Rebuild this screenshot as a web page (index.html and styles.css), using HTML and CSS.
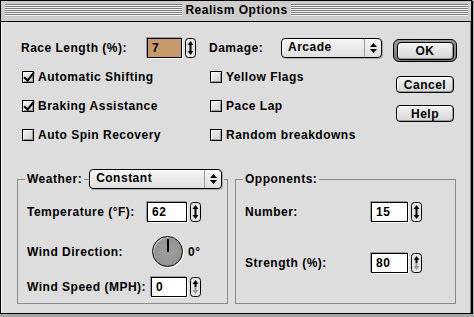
FILE: index.html
```html
<!DOCTYPE html>
<html lang="en">
<head>
    <meta charset="UTF-8">
    <title>Realism Options</title>
    <link rel="stylesheet" href="styles.css">
</head>
<body>

    <div class="window">

        <!-- Title bar -->
        <div class="titlebar">
            <div class="stripes"></div>
            <span class="title">Realism Options</span>
            <div class="stripes"></div>
        </div>

        <div class="content">

            <!-- General options -->
            <div class="top">
                <div class="row">
                    <span class="race-label">Race Length (%):</span>
                    <span class="field field-race">7</span>
                    <span class="stepper">
                        <svg width="11" height="20" viewBox="0 0 11 20"><rect x="0.5" y="0.5" width="10" height="19" rx="3" fill="#e6e6e6" stroke="#000"/><path d="M5.5 3 L8.5 7 L2.5 7 Z M5.5 17 L8.5 13 L2.5 13 Z" fill="#000"/><rect x="4.5" y="7" width="2" height="6" fill="#000"/></svg>
                    </span>
                </div>
                <div class="row">
                    <span class="damage-label">Damage:</span>
                    <span class="popup popup-damage">
                        <span class="popup-text">Arcade</span>
                        <span class="popup-arrows"><svg width="7" height="10" viewBox="0 0 7 10"><path d="M3.5 0 L7 4 L0 4 Z M3.5 10 L7 6 L0 6 Z" fill="#000"/></svg></span>
                    </span>
                </div>
                <div class="buttons">
                    <div class="default-ring"><button class="btn btn-ok">OK</button></div>
                    <button class="btn btn-cancel">Cancel</button>
                    <button class="btn btn-help">Help</button>
                </div>

                <label class="check"><span class="box checked"></span>Automatic Shifting</label>
                <label class="check"><span class="box"></span>Yellow Flags</label>
                <label class="check"><span class="box checked"></span>Braking Assistance</label>
                <label class="check"><span class="box"></span>Pace Lap</label>
                <label class="check"><span class="box"></span>Auto Spin Recovery</label>
                <label class="check"><span class="box"></span>Random breakdowns</label>
            </div>

            <!-- Group boxes -->
            <div class="groups">
                <fieldset class="group group-weather">
                    <legend>
                        <span>Weather:</span>
                        <span class="legend-line"></span>
                        <span class="popup popup-weather">
                            <span class="popup-text">Constant</span>
                            <span class="popup-arrows"><svg width="7" height="10" viewBox="0 0 7 10"><path d="M3.5 0 L7 4 L0 4 Z M3.5 10 L7 6 L0 6 Z" fill="#000"/></svg></span>
                        </span>
                    </legend>

                    <div class="grow grow-temp">
                        <span class="grow-label">Temperature (°F):</span>
                        <span class="field field-temp">62</span>
                        <span class="stepper">
                            <svg width="11" height="20" viewBox="0 0 11 20"><rect x="0.5" y="0.5" width="10" height="19" rx="3" fill="#e6e6e6" stroke="#000"/><path d="M5.5 3 L8.5 7 L2.5 7 Z M5.5 17 L8.5 13 L2.5 13 Z" fill="#000"/><rect x="4.5" y="7" width="2" height="6" fill="#000"/></svg>
                        </span>
                    </div>
                    <div class="grow grow-wind">
                        <span class="grow-label">Wind Direction:</span>
                        <span class="dial"><span class="dial-hand"></span></span>
                        <span class="dial-value">0°</span>
                    </div>
                    <div class="grow grow-speed">
                        <span class="grow-label">Wind Speed (MPH):</span>
                        <span class="field field-speed">0</span>
                        <span class="stepper">
                            <svg width="11" height="20" viewBox="0 0 11 20"><rect x="0.5" y="0.5" width="10" height="19" rx="3" fill="#e6e6e6" stroke="#000"/><path d="M5.5 3 L8.5 7 L2.5 7 Z" fill="#000"/><rect x="4.5" y="7" width="2" height="3" fill="#000"/><path d="M5.5 17 L8.5 13 L2.5 13 Z" fill="#999"/><rect x="4.5" y="10" width="2" height="3" fill="#999"/></svg>
                        </span>
                    </div>
                </fieldset>

                <fieldset class="group group-opponents">
                    <legend><span>Opponents:</span></legend>

                    <div class="grow grow-number">
                        <span class="grow-label">Number:</span>
                        <span class="field field-opp">15</span>
                        <span class="stepper">
                            <svg width="11" height="20" viewBox="0 0 11 20"><rect x="0.5" y="0.5" width="10" height="19" rx="3" fill="#e6e6e6" stroke="#000"/><path d="M5.5 3 L8.5 7 L2.5 7 Z M5.5 17 L8.5 13 L2.5 13 Z" fill="#000"/><rect x="4.5" y="7" width="2" height="6" fill="#000"/></svg>
                        </span>
                    </div>
                    <div class="grow grow-strength">
                        <span class="grow-label">Strength (%):</span>
                        <span class="field field-opp">80</span>
                        <span class="stepper">
                            <svg width="11" height="20" viewBox="0 0 11 20"><rect x="0.5" y="0.5" width="10" height="19" rx="3" fill="#e6e6e6" stroke="#000"/><path d="M5.5 3 L8.5 7 L2.5 7 Z" fill="#000"/><rect x="4.5" y="7" width="2" height="3" fill="#000"/><path d="M5.5 17 L8.5 13 L2.5 13 Z" fill="#999"/><rect x="4.5" y="10" width="2" height="3" fill="#999"/></svg>
                        </span>
                    </div>
                </fieldset>
            </div>

        </div>
    </div>

</body>
</html>
```

FILE: styles.css
```css
body {
    margin: 0;
    background-color: #a8a8a8;
    font-family: "Liberation Sans", Arial, sans-serif;
    font-size: 12px;
    font-weight: bold;
    letter-spacing: 0.5px;
    color: #000;
}

.window {
    width: 472px;
    height: 314px;
    box-sizing: border-box;
    border: 1px solid #000;
    box-shadow: 1px 1px 0 #000;
    background-color: #dddddd;
    display: flex;
    flex-direction: column;
}

/* Title bar */
.titlebar {
    box-sizing: border-box;
    padding: 3px 3px 0 4px;
    background-color: #cccccc;
    border-bottom: 1px solid #000;
    display: flex;
    flex: none;
    height: 21px;
}

.stripes {
    flex: 1;
    height: 12px;
    background: repeating-linear-gradient(to bottom, #7b7b7b 0, #7b7b7b 1px, #f4f4f4 1px, #f4f4f4 2px);
}

.title {
    margin: -2px 3px 0;
    line-height: 16px;
}

.content {
    flex: 1;
    padding: 11px 0 0 15px;
    border-left: 1px solid #f8f8f8;
    border-right: 1px solid #888;
}

/* Top area */
.top {
    display: grid;
    grid-template-columns: 188px 184px 64px;
    grid-template-rows: repeat(4, 29px);
    padding-left: 4px;
}

.row {
    display: flex;
    align-items: center;
}

.race-label {
    width: 126px;
}

.damage-label {
    width: 72px;
}

.field {
    height: 20px;
    box-sizing: border-box;
    border: 1px solid #000;
    background-color: #fff;
    box-shadow: -1px -1px 0 #999, 1px 1px 0 #fff;
    padding: 2px 0 0 4px;
    line-height: 15px;
}

.field-race {
    width: 35px;
    background-color: #c89a6b;
}

.stepper {
    display: flex;
    margin-left: 3px;
}

.popup {
    display: flex;
    height: 20px;
    box-sizing: border-box;
    border: 1px solid #000;
    border-radius: 4px;
    background: linear-gradient(#f6f6f6, #dedede);
    box-shadow: inset 1px 1px 0 #fff, 1px 1px 0 #aaa;
}

.popup-damage {
    width: 101px;
}

.popup-text {
    flex: 1;
    padding-left: 6px;
    line-height: 17px;
}

.popup-arrows {
    width: 16px;
    border-left: 1px solid #999;
    display: flex;
    align-items: center;
    justify-content: center;
}

.buttons {
    grid-column: 3;
    grid-row: 1 / span 4;
    display: flex;
    flex-direction: column;
    align-items: center;
    padding-top: 6px;
}

.default-ring {
    width: 64px;
    height: 23px;
    box-sizing: border-box;
    border: 1px solid #000;
    border-radius: 6px;
    background: linear-gradient(#999, #777);
    display: flex;
    align-items: center;
    justify-content: center;
}

.btn {
    font-family: inherit;
    font-size: 12px;
    font-weight: bold;
    letter-spacing: 0.5px;
    color: #000;
    width: 58px;
    height: 17px;
    padding: 0;
    border: 1px solid #000;
    border-radius: 4px;
    background: linear-gradient(#f2f2f2, #d6d6d6);
    box-shadow: inset 1px 1px 0 #fff, inset -1px -1px 0 #999;
}

.btn-ok {
    width: 57px;
    height: 18px;
}

.btn-cancel {
    margin-top: 14px;
}

.btn-help {
    margin-top: 12px;
}

.check {
    display: flex;
    align-items: center;
}

.box {
    position: relative;
    width: 12px;
    height: 12px;
    box-sizing: border-box;
    margin: 0 4px 0 1px;
    border: 1px solid #000;
    background: linear-gradient(135deg, #f4f4f4, #cfcfcf);
    box-shadow: inset 1px 1px 0 #fff, inset -1px -1px 0 #999;
}

.box.checked::after {
    content: "";
    position: absolute;
    left: 3px;
    top: -2px;
    width: 4px;
    height: 9px;
    border-right: 2px solid #000;
    border-bottom: 2px solid #000;
    transform: rotate(38deg);
}

/* Group boxes */
.groups {
    display: flex;
    gap: 7px;
    margin-top: 20px;
}

.group {
    margin: 0;
    min-width: 0;
    border: 1px solid #8a8a8a;
    padding: 13px 26px 6px 8px;
}

.group legend {
    display: flex;
    align-items: center;
    height: 20px;
    padding: 0 2px;
    margin-left: -1px;
}

.group-weather {
    width: 211px;
    box-sizing: border-box;
}

.group-opponents {
    width: 221px;
    box-sizing: border-box;
    padding-right: 33px;
}

.legend-line {
    width: 5px;
    height: 1px;
    margin: 0 0 0 2px;
    background-color: #8a8a8a;
}

.popup-weather {
    width: 133px;
}

.grow {
    display: flex;
    align-items: center;
    height: 20px;
    padding-left: 1px;
}

.grow-label {
    flex: 1;
}

.grow-wind {
    height: 31px;
    margin-top: 14px;
}

.grow-speed {
    margin-top: 10px;
}

.grow-strength {
    margin-top: 31px;
}

.field-temp {
    width: 40px;
}

.field-speed {
    width: 36px;
}

.field-opp {
    width: 37px;
}

.dial {
    position: relative;
    width: 31px;
    height: 31px;
    box-sizing: border-box;
    border: 1px solid #000;
    border-radius: 50%;
    background: radial-gradient(#a0a0a0, #8c8c8c);
    box-shadow: inset 1px 1px 0 #ccc, 1px 1px 0 #fff;
}

.dial-hand {
    position: absolute;
    left: 14px;
    top: 2px;
    width: 2px;
    height: 13px;
    background-color: #000;
}

.dial-value {
    width: 13px;
    margin-left: 5px;
}
```
